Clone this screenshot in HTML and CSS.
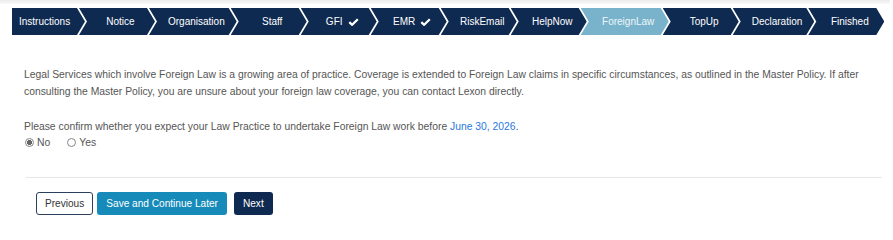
FILE: index.html
```html
<!DOCTYPE html>
<html lang="en">
<head>
<meta charset="utf-8">
<title>Foreign Law</title>
<link rel="stylesheet" href="styles.css">
</head>
<body>
<div class="topline"></div>
<nav class="steps">
  <div class="step first">Instructions</div>
  <div class="step">Notice</div>
  <div class="step">Organisation</div>
  <div class="step">Staff</div>
  <div class="step">GFI <svg class="tick" viewBox="0 0 11 8" width="11" height="8"><path d="M1.3 4.2 L4.2 6.8 L9.8 1.2" fill="none" stroke="#fff" stroke-width="2.3" stroke-linejoin="round"/></svg></div>
  <div class="step">EMR <svg class="tick" viewBox="0 0 11 8" width="11" height="8"><path d="M1.3 4.2 L4.2 6.8 L9.8 1.2" fill="none" stroke="#fff" stroke-width="2.3" stroke-linejoin="round"/></svg></div>
  <div class="step">RiskEmail</div>
  <div class="step">HelpNow</div>
  <div class="step active">ForeignLaw</div>
  <div class="step">TopUp</div>
  <div class="step">Declaration</div>
  <div class="step">Finished</div>
</nav>
<main class="content">
  <p class="intro">Legal Services which involve Foreign Law is a growing area of practice. Coverage is extended to Foreign Law claims in specific circumstances, as outlined in the Master Policy. If after consulting the Master Policy, you are unsure about your foreign law coverage, you can contact Lexon directly.</p>
  <p class="question">Please confirm whether you expect your Law Practice to undertake Foreign Law work before <span class="date">June 30, 2026</span>.</p>
  <div class="radios">
    <label class="radio"><input type="radio" name="fl" checked><span>No</span></label>
    <label class="radio"><input type="radio" name="fl"><span>Yes</span></label>
  </div>
</main>
<hr class="divider">
<div class="actions">
  <button class="btn btn-outline">Previous</button>
  <button class="btn btn-save">Save and Continue Later</button>
  <button class="btn btn-next">Next</button>
</div>
</body>
</html>
```
FILE: styles.css
```css
* { box-sizing: border-box; }
html, body { margin: 0; padding: 0; background: #fff; }
body {
  font-family: "Liberation Sans", Arial, sans-serif;
  font-size: 10.35px;
  color: #555;
  width: 893px;
  height: 221px;
  overflow: hidden;
}
.topline {
  height: 4px;
  background: linear-gradient(#ececec, #fafafa);
  margin-right: 3px;
}
.steps {
  display: flex;
  height: 27px;
  margin: 4px 0 0 12px;
}
.step {
  flex: 0 0 auto;
  min-width: 76px;
  padding: 0 12px 0 19px;
  margin-left: -6px;
  background: #0f2a50;
  color: #fff;
  font-size: 10px;
  display: flex;
  align-items: center;
  justify-content: center;
  white-space: nowrap;
  clip-path: polygon(0 0, calc(100% - 8px) 0, 100% 50%, calc(100% - 8px) 100%, 0 100%, 8px 50%);
}
.step.first {
  margin-left: 0;
  min-width: 73px;
  padding: 0 13px 0 7px;
  justify-content: flex-start;
  clip-path: polygon(0 0, calc(100% - 8px) 0, 100% 50%, calc(100% - 8px) 100%, 0 100%);
}
.step.active {
  background: #78b3cb;
  color: #eef6f9;
  min-width: 88px;
}
.tick {
  margin-left: 5px;
  display: block;
}
.content {
  padding: 0 24px;
}
.intro {
  margin: 32px 0 0;
  line-height: 16.5px;
}
.question {
  margin: 19px 0 0;
  line-height: 16.5px;
}
.date { color: #2a78e0; }
.radios {
  display: flex;
  gap: 17px;
  height: 14px;
  align-items: center;
  padding-left: 1px;
}
.radio {
  display: flex;
  align-items: center;
  gap: 3px;
}
.radio input {
  appearance: none;
  -webkit-appearance: none;
  margin: 0;
  width: 9px;
  height: 9px;
  border: 1px solid #858585;
  border-radius: 50%;
  background: #fff;
}
.radio input:checked {
  background: radial-gradient(circle, #666 0 2.3px, #fff 2.8px);
}
.divider {
  margin: 27px 11px 0 26px;
  border: 0;
  border-top: 1px solid #e6e6e6;
  height: 0;
}
.actions {
  display: flex;
  gap: 4px;
  margin: 14px 0 0 36px;
}
.btn {
  font-family: "Liberation Sans", Arial, sans-serif;
  font-size: 10.1px;
  height: 23px;
  padding: 0 8px;
  border-radius: 3px;
  border: 1px solid transparent;
  cursor: pointer;
}
.btn-outline {
  background: #fff;
  border-color: #2b3f5e;
  color: #333;
}
.btn-save {
  background: #168ab9;
  color: #fff;
}
.btn-next {
  background: #0f2a50;
  color: #fff;
  margin-left: 3px;
}
```
